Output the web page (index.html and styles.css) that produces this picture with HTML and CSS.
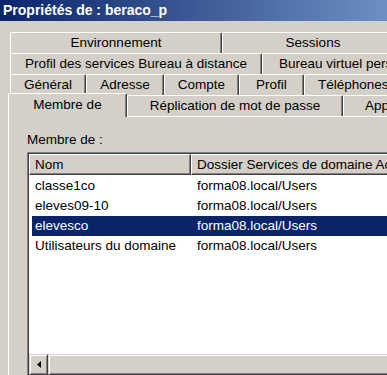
FILE: index.html
```html
<!DOCTYPE html>
<html>
<head>
<meta charset="utf-8">
<link rel="stylesheet" href="styles.css">
</head>
<body>

<!-- Barre de titre -->
<div class="titlebar">Propriétés de : beraco_p</div>

<!-- Onglets -->
<div class="sheet">

    <div class="tabrow">
        <div class="tab w-env">Environnement</div>
        <div class="tab w-sess">Sessions</div>
    </div>

    <div class="tabrow">
        <div class="tab w-rds">Profil des services Bureau à distance</div>
        <div class="tab w-bvp">Bureau virtuel personnel</div>
    </div>

    <div class="tabrow">
        <div class="tab w-gen">Général</div>
        <div class="tab w-adr">Adresse</div>
        <div class="tab w-cpt">Compte</div>
        <div class="tab w-prf">Profil</div>
        <div class="tab w-tel">Téléphones</div>
    </div>

    <div class="tabrow front">
        <div class="tab active w-mbr">Membre de</div>
        <div class="tab w-rep">Réplication de mot de passe</div>
        <div class="tab w-app">Appel entrant</div>
    </div>

    <!-- Page "Membre de" -->
    <div class="panel">
        <div class="caption">Membre de :</div>

        <div class="listview">
            <div class="lv-inner">
                <div class="lv-head">
                    <div class="hcell col1">Nom</div>
                    <div class="hcell col2">Dossier Services de domaine Active Directory</div>
                </div>

                <div class="lv-body">
                    <div class="row"><span class="c1">classe1co</span><span>forma08.local/Users</span></div>
                    <div class="row"><span class="c1">eleves09-10</span><span>forma08.local/Users</span></div>
                    <div class="row sel"><span class="c1">elevesco</span><span>forma08.local/Users</span></div>
                    <div class="row"><span class="c1">Utilisateurs du domaine</span><span>forma08.local/Users</span></div>
                </div>

                <div class="hscroll">
                    <div class="sbtn">
                        <svg width="4" height="7" viewBox="0 0 4 7"><polygon points="4,0 4,7 0,3.5" fill="#000"/></svg>
                    </div>
                    <div class="thumb"></div>
                </div>
            </div>
        </div>
    </div>

</div>

</body>
</html>
```

FILE: styles.css
```css
/* ---------------- Fenetre ---------------- */
body
{
  margin: 0;
  width: 387px;
  height: 375px;
  overflow: hidden;
  background-color: #d4d0c8;
  font-family: "Liberation Sans", Arial, sans-serif;
  font-size: 13.5px;
  color: #000;
}

.titlebar
{
  height: 21px;
  line-height: 21px;
  padding-left: 3px;
  background: linear-gradient(to right, #0a246a, #6d8fc2);
  color: #fff;
  font-weight: bold;
  font-size: 14px;
  white-space: nowrap;
}

.sheet
{
  padding-top: 11px;
  width: 440px;
}

/* ---------------- Onglets ---------------- */
.tabrow
{
  display: flex;
  height: 21px;
  margin-left: 10px;
}

.tab
{
  flex: none;
  box-sizing: border-box;
  height: 21px;
  line-height: 19px;
  border-top: 1px solid #fff;
  border-left: 1px solid #fff;
  border-right: 1px solid #404040;
  border-radius: 2px 2px 0 0;
  box-shadow: inset -1px 0 #808080;
  background-color: #d4d0c8;
  text-align: center;
  white-space: nowrap;
  overflow: hidden;
}

.tabrow.front
{
  height: 23px;
  margin-top: -2px;
  margin-left: 8px;
  align-items: flex-end;
}

.tab.active
{
  position: relative;
  z-index: 1;
  height: 24px;
  margin-bottom: -1px;
  line-height: 21px;
}

.w-env  { width: 212px; }
.w-sess { width: 182px; }
.w-rds  { width: 252px; }
.w-bvp  { width: 180px; text-align: left; padding-left: 16px; }
.w-gen  { width: 76px; }
.w-adr  { width: 78px; }
.w-cpt  { width: 75px; }
.w-prf  { width: 65px; }
.w-tel  { width: 110px; text-align: left; padding-left: 13px; }
.w-mbr  { width: 119px; }
.w-rep  { width: 216px; }
.w-app  { width: 110px; text-align: left; padding-left: 21px; }

/* ---------------- Page ---------------- */
.panel
{
  border-top: 1px solid #fff;
  border-left: 1px solid #fff;
  margin-left: 8px;
  padding: 15px 0 0 18px;
  height: 300px;
}

.caption
{
  height: 16px;
  line-height: 16px;
  margin-bottom: 4px;
}

/* ---------------- Liste ---------------- */
.listview
{
  border-top: 1px solid #808080;
  border-left: 1px solid #808080;
  width: 400px;
}

.lv-inner
{
  border-top: 1px solid #404040;
  border-left: 1px solid #404040;
  background-color: #fff;
}

.lv-head
{
  display: flex;
}

.hcell
{
  flex: none;
  box-sizing: border-box;
  height: 21px;
  line-height: 19px;
  padding-left: 5px;
  border-top: 1px solid #fff;
  border-left: 1px solid #fff;
  border-right: 1px solid #404040;
  border-bottom: 1px solid #404040;
  box-shadow: inset -1px -1px #808080;
  background-color: #d4d0c8;
  white-space: nowrap;
  overflow: hidden;
}

.col1 { width: 162px; }
.col2 { width: 300px; }

.lv-body
{
  height: 178px;
  padding-top: 1px;
}

.row
{
  display: flex;
  height: 20px;
  line-height: 20px;
  margin-left: 3px;
  padding-left: 3px;
  white-space: nowrap;
}

.row .c1
{
  width: 162px;
}

.row.sel
{
  background-color: #0a246a;
  color: #fff;
}

/* ---------------- Barre de defilement ---------------- */
.hscroll
{
  display: flex;
  height: 21px;
  background-color: #d4d0c8;
}

.sbtn, .thumb
{
  box-sizing: border-box;
  border: 1px solid;
  border-color: #d4d0c8 #404040 #404040 #d4d0c8;
  box-shadow: inset 1px 1px #fff, inset -1px -1px #808080;
}

.sbtn
{
  width: 19px;
  display: flex;
  align-items: center;
  justify-content: center;
}

.thumb
{
  flex: 1;
}
```
